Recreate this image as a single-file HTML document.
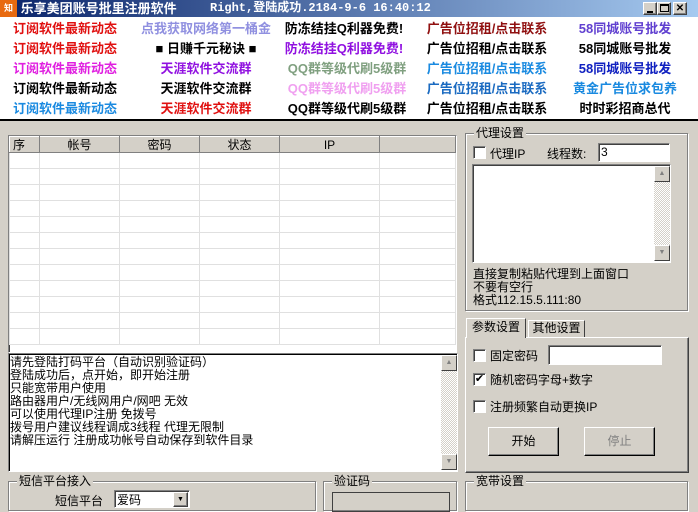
<!DOCTYPE html>
<html><head><meta charset="utf-8"><style>
*{margin:0;padding:0;box-sizing:border-box}
body{width:698px;height:503px;overflow:hidden;background:#d4d0c8;font-family:"Liberation Sans","Noto Sans CJK SC",sans-serif;font-size:12px;position:relative;color:#000}
.abs{position:absolute}
.title{left:0;top:0;width:698px;height:17px;background:linear-gradient(90deg,#0a246a,#a6caf0);color:#fff;font-weight:bold;font-size:13px;line-height:17px}
.ads{left:0;top:17px;width:698px;height:104px;background:#fff;border-bottom:2px solid #000}
.ad{position:absolute;font-weight:bold;font-size:13px;white-space:nowrap;transform:translateX(-50%);line-height:16px}
.sunk{border:1px solid;border-color:#808080 #fff #fff #808080;box-shadow:inset 1px 1px 0 #404040;background:#fff}
.grp{border:1px solid #808080;box-shadow:1px 1px 0 #fff,inset 1px 1px 0 #fff}
.lg{position:absolute;top:-8px;left:8px;background:#d4d0c8;padding:0 2px;line-height:14px}
.cb{position:absolute;width:13px;height:13px;background:#fff;border:1px solid;border-color:#808080 #fff #fff #808080;box-shadow:inset 1px 1px 0 #404040;font-size:11px;line-height:11px;text-align:center}
.btn{position:absolute;border:1px solid;border-color:#fff #404040 #404040 #fff;box-shadow:inset -1px -1px 0 #808080;text-align:center;background:#d4d0c8}
.sb{position:absolute;width:16px;background:repeating-conic-gradient(#d4d0c8 0 25%,#fff 0 50%) 0 0/2px 2px}
.arr{position:absolute;left:0;width:16px;height:16px;background:#d4d0c8;border:1px solid;border-color:#fff #404040 #404040 #fff;font-size:7px;line-height:14px;text-align:center;color:#808080}
table{border-collapse:collapse}
td{border:1px solid #e0e0e0;height:16px}
th{font-weight:normal;height:16px;border:1px solid;border-color:#fff #808080 #808080 #fff;background:#d4d0c8;font-size:12px;line-height:14px}
</style></head><body>
<div class="abs title"><span style="display:inline-block;width:17px;height:17px;background:#e86a10;color:#fff;font-size:9px;text-align:center;vertical-align:top">知乎</span> 乐享美团账号批里注册软件<span style="position:absolute;left:210px;font-family:'Liberation Mono','Noto Sans CJK SC',monospace;font-size:12px">Right,登陆成功.2184-9-6 16:40:12</span>
<div style="position:absolute;left:643px;top:2px;width:14px;height:13px" class="btn"><span style="position:absolute;left:3px;top:8px;width:6px;height:2px;background:#000"></span></div>
<div style="position:absolute;left:657px;top:2px;width:14px;height:13px" class="btn"><span style="position:absolute;left:2px;top:1px;width:9px;height:8px;border:1px solid #000;border-top-width:2px"></span></div>
<div style="position:absolute;left:673px;top:2px;width:14px;height:13px;color:#000;font-size:10px;line-height:11px" class="btn">✕</div>
</div>
<div class="abs ads">
<div class="ad" style="left:65px;top:4px;color:#e01010">订阅软件最新动态</div>
<div class="ad" style="left:65px;top:24px;color:#e01010">订阅软件最新动态</div>
<div class="ad" style="left:65px;top:44px;color:#e020e0">订阅软件最新动态</div>
<div class="ad" style="left:65px;top:64px;color:#000">订阅软件最新动态</div>
<div class="ad" style="left:65px;top:84px;color:#1a8ae0">订阅软件最新动态</div>
<div class="ad" style="left:206px;top:4px;color:#9090e0">点我获取网络第一桶金</div>
<div class="ad" style="left:206px;top:24px;color:#000">■ 日赚千元秘诀 ■</div>
<div class="ad" style="left:206px;top:44px;color:#9010e0">天涯软件交流群</div>
<div class="ad" style="left:206px;top:64px;color:#000">天涯软件交流群</div>
<div class="ad" style="left:206px;top:84px;color:#e01010">天涯软件交流群</div>
<div class="ad" style="left:344px;top:4px;color:#000">防冻结挂Q利器免费!</div>
<div class="ad" style="left:344px;top:24px;color:#9010e0">防冻结挂Q利器免费!</div>
<div class="ad" style="left:347px;top:44px;color:#80a080">QQ群等级代刷5级群</div>
<div class="ad" style="left:347px;top:64px;color:#f0a0f0">QQ群等级代刷5级群</div>
<div class="ad" style="left:347px;top:84px;color:#000">QQ群等级代刷5级群</div>
<div class="ad" style="left:487px;top:4px;color:#901010">广告位招租/点击联系</div>
<div class="ad" style="left:487px;top:24px;color:#000">广告位招租/点击联系</div>
<div class="ad" style="left:487px;top:44px;color:#1a8ae0">广告位招租/点击联系</div>
<div class="ad" style="left:487px;top:64px;color:#1a6ac0">广告位招租/点击联系</div>
<div class="ad" style="left:487px;top:84px;color:#000">广告位招租/点击联系</div>
<div class="ad" style="left:625px;top:4px;color:#6040d0">58同城账号批发</div>
<div class="ad" style="left:625px;top:24px;color:#000">58同城账号批发</div>
<div class="ad" style="left:625px;top:44px;color:#1020c0">58同城账号批发</div>
<div class="ad" style="left:625px;top:64px;color:#1a8ae0">黄金广告位求包养</div>
<div class="ad" style="left:625px;top:84px;color:#000">时时彩招商总代</div>
</div>

<div class="abs sunk" style="left:8px;top:135px;width:449px;height:218px;overflow:hidden">
<table style="width:447px;table-layout:fixed">
<colgroup><col style="width:30px"><col style="width:80px"><col style="width:80px"><col style="width:80px"><col style="width:100px"><col></colgroup>
<tr><th style="text-align:left;padding-left:3px">序</th><th>帐号</th><th>密码</th><th>状态</th><th>IP</th><th></th></tr>
<tr><td></td><td></td><td></td><td></td><td></td><td></td></tr>
<tr><td></td><td></td><td></td><td></td><td></td><td></td></tr>
<tr><td></td><td></td><td></td><td></td><td></td><td></td></tr>
<tr><td></td><td></td><td></td><td></td><td></td><td></td></tr>
<tr><td></td><td></td><td></td><td></td><td></td><td></td></tr>
<tr><td></td><td></td><td></td><td></td><td></td><td></td></tr>
<tr><td></td><td></td><td></td><td></td><td></td><td></td></tr>
<tr><td></td><td></td><td></td><td></td><td></td><td></td></tr>
<tr><td></td><td></td><td></td><td></td><td></td><td></td></tr>
<tr><td></td><td></td><td></td><td></td><td></td><td></td></tr>
<tr><td></td><td></td><td></td><td></td><td></td><td></td></tr>
<tr><td></td><td></td><td></td><td></td><td></td><td></td></tr>
</table></div>

<div class="abs sunk" style="left:8px;top:353px;width:450px;height:119px;box-shadow:inset 1px 1px 0 #000">
<div style="position:absolute;left:1px;top:2px;line-height:13px;font-size:12px;white-space:pre">请先登陆打码平台（自动识别验证码）
登陆成功后，点开始，即开始注册
只能宽带用户使用
路由器用户/无线网用户/网吧 无效
可以使用代理IP注册 免拨号
拨号用户建议线程调成3线程 代理无限制
请解压运行 注册成功帐号自动保存到软件目录</div>
<div class="sb" style="left:432px;top:1px;height:115px"><div class="arr" style="top:0">▲</div><div class="arr" style="bottom:0">▼</div></div>
</div>

<div class="abs grp" style="left:8px;top:481px;width:308px;height:30px"><span class="lg">短信平台接入</span>
<span style="position:absolute;left:46px;top:10px">短信平台</span>
<div class="sunk" style="position:absolute;left:105px;top:8px;width:76px;height:18px;padding-left:2px">爱码<div class="btn" style="left:58px;top:1px;width:15px;height:15px;font-size:7px;line-height:13px">▼</div></div></div>
<div class="abs grp" style="left:323px;top:481px;width:134px;height:30px"><span class="lg">验证码</span>
<div style="position:absolute;left:8px;top:10px;width:118px;height:20px;border:1px solid #404040"></div></div>

<div class="abs grp" style="left:465px;top:133px;width:223px;height:178px"><span class="lg">代理设置</span>
<div class="cb" style="left:7px;top:12px"></div><span style="position:absolute;left:24px;top:11px">代理IP</span>
<span style="position:absolute;left:81px;top:11px">线程数:</span>
<div class="sunk" style="position:absolute;left:132px;top:9px;width:72px;height:19px;padding-left:2px;line-height:17px">3</div>
<div class="sunk" style="position:absolute;left:6px;top:30px;width:199px;height:99px">
<div class="sb" style="left:181px;top:1px;height:95px"><div class="arr" style="top:0">▲</div><div class="arr" style="bottom:0">▼</div></div></div>
<div style="position:absolute;left:7px;top:134px;line-height:13px;white-space:pre">直接复制粘贴代理到上面窗口
不要有空行
格式112.15.5.111:80</div>
</div>

<div class="btn" style="left:466px;top:318px;width:60px;height:20px;line-height:17px;border-bottom:none;box-shadow:none;z-index:2">参数设置</div>
<div class="btn" style="left:528px;top:320px;width:57px;height:17px;line-height:15px;border-bottom:none;box-shadow:none">其他设置</div>
<div class="btn" style="left:465px;top:337px;width:224px;height:136px">
<div class="cb" style="left:7px;top:11px"></div><span style="position:absolute;left:24px;top:9px">固定密码</span>
<div class="sunk" style="position:absolute;left:82px;top:7px;width:114px;height:20px"></div>
<div class="cb" style="left:7px;top:35px">✔</div><span style="position:absolute;left:24px;top:33px">随机密码字母+数字</span>
<div class="cb" style="left:7px;top:62px"></div><span style="position:absolute;left:24px;top:60px">注册频繁自动更换IP</span>
<div class="btn" style="left:22px;top:89px;width:71px;height:29px;line-height:26px;border-color:#fff #000 #000 #fff">开始</div>
<div class="btn" style="left:118px;top:89px;width:71px;height:29px;line-height:26px;color:#808080;border-color:#fff #000 #000 #fff">停止</div>
</div>
<div class="abs grp" style="left:465px;top:481px;width:223px;height:30px"><span class="lg">宽带设置</span></div>
</body></html>
